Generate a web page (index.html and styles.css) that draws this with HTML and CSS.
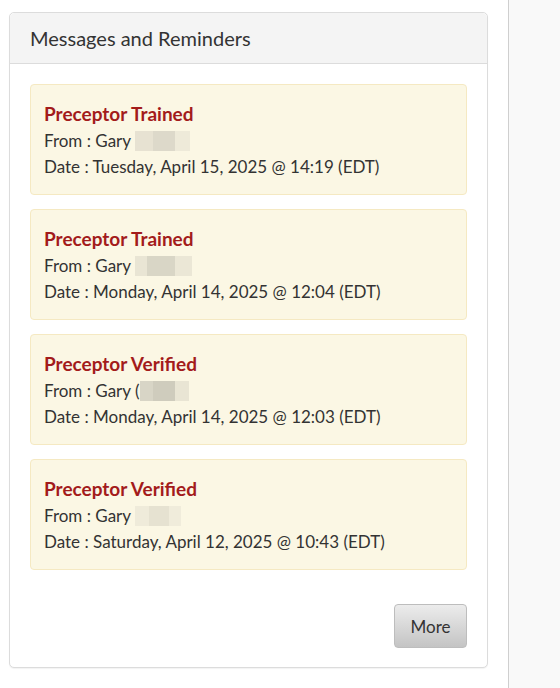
FILE: index.html
```html
<!DOCTYPE html>
<html lang="en">
<head>
  <meta charset="UTF-8" />
  <meta name="viewport" content="width=device-width, initial-scale=1" />
  <title>Messages and Reminders</title>
  <link rel="stylesheet" href="styles.css">
</head>
<body>
  <div class="layout">
    <div class="main">
      <!-- Messages panel -->
      <div class="panel">
        <div class="panel-heading">Messages and Reminders</div>
        <div class="panel-body">
          <div class="message">
            <div class="message-title">Preceptor Trained</div>
            <div class="message-line">From : Gary <span class="redacted r1"><i></i><i></i><i></i></span></div>
            <div class="message-line">Date : Tuesday, April 15, 2025 @ 14:19 (EDT)</div>
          </div>
          <div class="message">
            <div class="message-title">Preceptor Trained</div>
            <div class="message-line">From : Gary <span class="redacted r2"><i></i><i></i><i></i></span></div>
            <div class="message-line">Date : Monday, April 14, 2025 @ 12:04 (EDT)</div>
          </div>
          <div class="message">
            <div class="message-title">Preceptor Verified</div>
            <div class="message-line">From : Gary (<span class="redacted r3"><i></i><i></i><i></i></span></div>
            <div class="message-line">Date : Monday, April 14, 2025 @ 12:03 (EDT)</div>
          </div>
          <div class="message">
            <div class="message-title">Preceptor Verified</div>
            <div class="message-line">From : Gary <span class="redacted r4"><i></i><i></i><i></i></span></div>
            <div class="message-line">Date : Saturday, April 12, 2025 @ 10:43 (EDT)</div>
          </div>
          <div class="panel-actions">
            <button class="btn-more">More</button>
          </div>
        </div>
      </div>
    </div>
    <div class="sidebar"></div>
  </div>
</body>
</html>
```

FILE: styles.css
```css
html, body {
  margin: 0;
  padding: 0;
  background: #fff;
  color: #333;
  font-family: Lato, "Open Sans", sans-serif;
}
.layout {
  display: flex;
  min-height: 688px;
}
.main {
  width: 508px;
  padding: 12px 20px 0 9px;
  box-sizing: border-box;
}
.sidebar {
  flex: 1;
  border-left: 1px solid #cfcfcf;
  background: #f9f9f9;
}

/* Panel */
.panel {
  border: 1px solid #dcdcdc;
  border-radius: 5px;
  background: #fff;
  box-shadow: 0 1px 1px rgba(0,0,0,0.05);
}
.panel-heading {
  background: #f4f4f4;
  border-bottom: 1px solid #dcdcdc;
  border-radius: 5px 5px 0 0;
  height: 50px;
  line-height: 50px;
  padding: 0 20px;
  font-size: 20px;
  color: #333;
}
.panel-body {
  padding: 20px 20px 19px;
}

/* Message cards */
.message {
  background: #fbf7e4;
  border: 1px solid #f5e9c2;
  border-radius: 4px;
  padding: 14px 13px 14px;
  margin-bottom: 14px;
}
.message-title {
  color: #a31b1b;
  font-size: 19px;
  font-weight: bold;
  line-height: 29px;
}
.message-line {
  font-size: 17px;
  line-height: 26px;
}
.redacted {
  display: inline-flex;
  vertical-align: -4px;
  height: 20px;
}
.redacted i {
  display: block;
  height: 100%;
}
.r1 i:nth-child(1) { width: 18px; background: #e7e2d2; }
.r1 i:nth-child(2) { width: 22px; background: #ddd9ca; }
.r1 i:nth-child(3) { width: 15px; background: #eeead9; }
.r2 i:nth-child(1) { width: 12px; background: #e9e5d4; }
.r2 i:nth-child(2) { width: 28px; background: #d9d6c6; }
.r2 i:nth-child(3) { width: 17px; background: #ebe7d6; }
.r3 i:nth-child(1) { width: 13px; background: #d8d5c6; }
.r3 i:nth-child(2) { width: 22px; background: #cfccbd; }
.r3 i:nth-child(3) { width: 14px; background: #e9e5d4; }
.r4 i:nth-child(1) { width: 14px; background: #efebda; }
.r4 i:nth-child(2) { width: 20px; background: #e6e2d1; }
.r4 i:nth-child(3) { width: 12px; background: #f0ecdb; }

.panel-actions {
  display: flex;
  justify-content: flex-end;
  padding-top: 20px;
}
.btn-more {
  width: 73px;
  height: 44px;
  font-family: inherit;
  font-size: 17px;
  color: #333;
  border: 1px solid #bdbdbd;
  border-radius: 4px;
  background: linear-gradient(#ececec, #c4c4c4);
  cursor: pointer;
}
```
